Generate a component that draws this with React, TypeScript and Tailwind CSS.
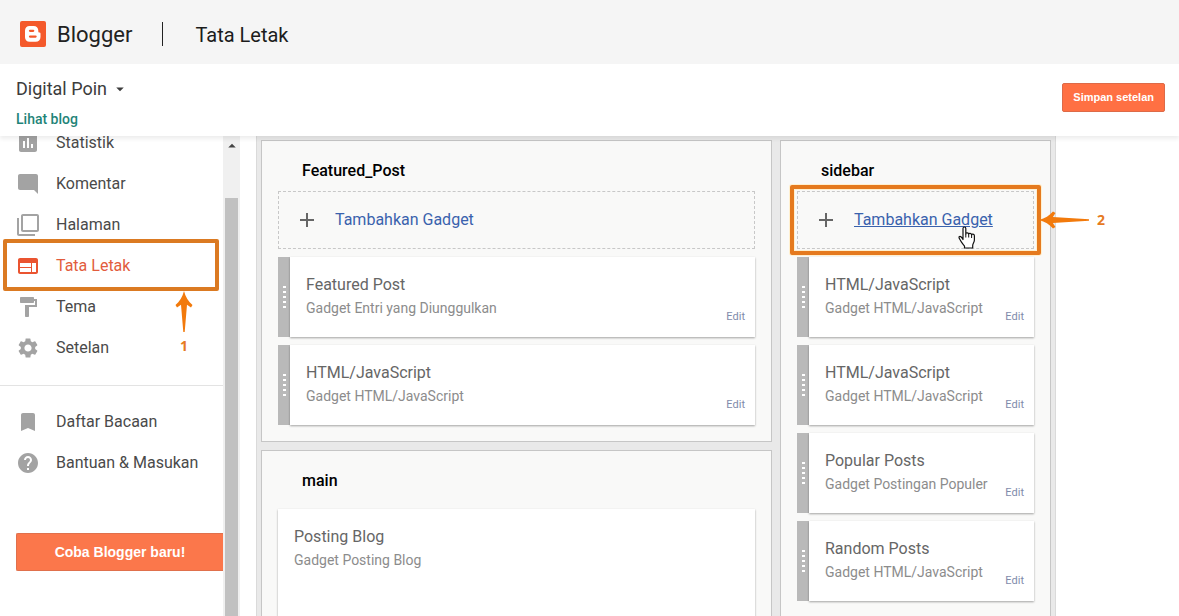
import { ReactNode } from "react";
import { IconType } from "react-icons";
import {
  MdAdd,
  MdArrowDropDown,
  MdArrowDropUp,
  MdAssessment,
  MdBookmark,
  MdFilterNone,
  MdFormatPaint,
  MdHelp,
  MdModeComment,
  MdSettings,
  MdWeb,
} from "react-icons/md";

type MenuItem = { label: string; icon: IconType; active?: boolean };

const menu: MenuItem[] = [
  { label: "Statistik", icon: MdAssessment },
  { label: "Komentar", icon: MdModeComment },
  { label: "Halaman", icon: MdFilterNone },
  { label: "Tata Letak", icon: MdWeb, active: true },
  { label: "Tema", icon: MdFormatPaint },
  { label: "Setelan", icon: MdSettings },
];

const links: MenuItem[] = [
  { label: "Daftar Bacaan", icon: MdBookmark },
  { label: "Bantuan & Masukan", icon: MdHelp },
];

const featured = [
  { title: "Featured Post", type: "Gadget Entri yang Diunggulkan" },
  { title: "HTML/JavaScript", type: "Gadget HTML/JavaScript" },
];

const sidebar = [
  { title: "HTML/JavaScript", type: "Gadget HTML/JavaScript" },
  { title: "HTML/JavaScript", type: "Gadget HTML/JavaScript" },
  { title: "Popular Posts", type: "Gadget Postingan Populer" },
  { title: "Random Posts", type: "Gadget HTML/JavaScript" },
];

function BloggerLogo() {
  return (
    <svg width="26" height="26" viewBox="0 0 26 26" aria-hidden="true">
      <rect width="26" height="26" rx="2" fill="#f4592b" />
      <path
        fill="#fff"
        fillRule="evenodd"
        d="M9.500 5h4.200c2.700 0 4.600 1.900 4.600 4.500v.8c0 .8.4 1.200 1 1.200.8 0 1.200.4 1.200 1.100V16c0 2.900-2 4.800-4.800 4.800H9.500C6.900 20.800 5 18.900 5 16.300V9.500C5 6.900 6.900 5 9.500 5zM10 8.800c-1.500 0-1.500 2.200 0 2.200h3.200c1.500 0 1.500-2.200 0-2.200zM10 14.600c-1.500 0-1.500 2.200 0 2.200h5.600c1.500 0 1.500-2.200 0-2.200z"
      />
    </svg>
  );
}

function HandCursor() {
  return (
    <svg
      className="absolute left-[160px] top-[34px]"
      width="18"
      height="23"
      viewBox="0 0 18 23"
      aria-hidden="true"
    >
      <path
        d="M5 13.500V2.500C5 .5 7.800 .5 7.800 2.500V8c0-1.700 2.900-1.500 2.900 .3 0-1.400 2.900-1.200 2.900 .6 0-1.300 2.800-1.100 2.800.8V14c0 2.500-1.700 3.500-1.700 5.500V22H6.500v-2C5 18 3.500 16.500 2.500 14.500 1 12 .5 11.500 1.200 10.700 2.500 9.700 4 11.500 5 13.500z"
        fill="#fff"
        stroke="#111"
        strokeWidth="1.200"
        strokeLinejoin="round"
      />
      <path d="M7.800 8v3.500M10.700 8.500v3M13.600 9v3" stroke="#111" strokeWidth="1" />
    </svg>
  );
}

function MenuRow({ item }: { item: MenuItem }) {
  const Icon = item.icon;
  return (
    <li className="relative">
      <a
        href="#"
        className={`flex h-[41px] items-center gap-4 px-4 ${
          item.active ? "text-[#e25c3d]" : "text-[#4a4a4a]"
        }`}
      >
        <Icon
          size={24}
          className={item.active ? "text-[#ea5430]" : "text-[#a3a3a3]"}
        />
        {item.label}
      </a>
      {item.active && (
        <>
          <div className="pointer-events-none absolute -top-[6px] left-[3px] h-[52px] w-[216px] rounded-xs border-4 border-[#db7a22]" />
          <div className="absolute left-[175px] top-[46px] z-10 flex w-[18px] flex-col items-center">
            <svg width="18" height="41" viewBox="0 0 18 41" aria-hidden="true">
              <path
                d="M9 0C10.500 6 13.500 10.500 17.500 14l-1.500 2.500L12 13.800 9.700 41H8.300L6 13.800 2 16.500 .5 14C4.500 10.500 7.500 6 9 0z"
                fill="#f27a0c"
              />
            </svg>
            <Step>1</Step>
          </div>
        </>
      )}
    </li>
  );
}

function Step({ children }: { children: ReactNode }) {
  return (
    <span className="font-['Open_Sans',sans-serif] text-sm leading-7 font-bold text-[#e67a22]">
      {children}
    </span>
  );
}

function Section({ title, children }: { title: string; children: ReactNode }) {
  return (
    <section className="border border-[#c6c6c6] bg-[#f9f9f8] px-4 pb-4">
      <h2 className="flex h-[50px] items-center pt-[10px] pl-6 font-medium text-black">
        {title}
      </h2>
      {children}
    </section>
  );
}

function AddGadget({ highlighted }: { highlighted?: boolean }) {
  return (
    <div className="relative flex h-[58px] items-center border border-dashed border-[#c8c8c8] pl-4">
      <MdAdd size={24} className="mr-4 text-[#666]" />
      <a
        href="#"
        className={`text-[#3a62ad] ${highlighted ? "underline" : ""}`}
      >
        Tambahkan Gadget
      </a>
      {highlighted && (
        <>
          <div className="pointer-events-none absolute -inset-x-2 -inset-y-[7px] rounded-xs border-4 border-[#e57a1e] shadow-[inset_0_0_0_1px_#fff0cf,0_0_0_1px_#fff0cf]" />
          <HandCursor />
          <div className="absolute left-full top-[14px] ml-[6px] flex items-center gap-2">
            <svg width="50" height="18" viewBox="0 0 50 18" aria-hidden="true">
              <path
                d="M0 9C6 7.500 10.500 4.500 14 .5L16.500 2 13.800 6 50 8.300v1.400L13.800 12 16.500 16l-2.500 1.500C10.500 13.500 6 10.500 0 9z"
                fill="#f27a0c"
              />
            </svg>
            <Step>2</Step>
          </div>
        </>
      )}
    </div>
  );
}

function Gadget({ title, type }: { title: string; type: string }) {
  return (
    <article className="mt-2 flex h-20">
      <div className="flex w-3 shrink-0 cursor-move flex-col items-center justify-center gap-[3px] bg-[#b9b9b9]">
        {[0, 1, 2, 3, 4].map((dot) => (
          <span key={dot} className="h-[2px] w-[3px] bg-white" />
        ))}
      </div>
      <div className="relative min-w-0 flex-1 bg-white px-4 pt-4 shadow-[0_1px_2px_rgba(0,0,0,0.35)]">
        <h3 className="leading-6 text-[#666]">{title}</h3>
        <p className="text-sm leading-[22px] text-[#8c8c8c]">{type}</p>
        <a
          href="#"
          className="absolute right-[10px] bottom-3 text-[11px] leading-4 text-[#7f8bab]"
        >
          Edit
        </a>
      </div>
    </article>
  );
}

export default function App() {
  return (
    <div className="flex h-screen flex-col overflow-hidden bg-white font-[Roboto,sans-serif] text-base">
      <header className="flex h-16 shrink-0 items-center bg-[#f5f5f5] px-5 pt-1">
        <BloggerLogo />
        <span className="ml-[11px] pt-px text-[22px] text-[#222]">Blogger</span>
        <span className="ml-[30px] h-6 w-px bg-[#222]" />
        <h1 className="ml-8 pt-[2px] text-xl text-[#1c1c1c]">Tata Letak</h1>
      </header>

      <div className="relative z-10 flex h-[72px] shrink-0 items-start justify-between bg-white pr-[14px] pl-4 shadow-[0_3px_4px_rgba(0,0,0,0.07)]">
        <div className="flex flex-col pt-[11px]">
          <button className="flex items-center gap-1 text-lg leading-7 text-[#3c3c3c]">
            Digital Poin
            <MdArrowDropDown size={18} />
          </button>
          <a href="#" className="mt-[2px] text-sm leading-7 font-medium text-[#1f8478]">
            Lihat blog
          </a>
        </div>
        <button className="mt-[19px] h-[29px] rounded-xs border border-[#dd6a48] bg-[#ff7043] px-[10px] font-['Liberation_Sans',Arial,sans-serif] text-[11px] font-bold text-white">
          Simpan setelan
        </button>
      </div>

      <div className="flex min-h-0 flex-1">
        <aside className="w-[223px] shrink-0 overflow-hidden">
          <nav className="-mt-[14px]">
            <ul>
              {menu.map((item) => (
                <MenuRow key={item.label} item={item} />
              ))}
            </ul>
            <ul className="mt-[17px] border-t border-[#e3e3e3] pt-[15px]">
              {links.map((item) => (
                <MenuRow key={item.label} item={item} />
              ))}
            </ul>
          </nav>
          <div className="mt-[50px] pl-4">
            <button className="h-[38px] w-full rounded-l-xs border border-r-0 border-[#e0704c] bg-[#fb774b] font-['Liberation_Sans',Arial,sans-serif] text-sm font-bold text-white">
              Coba Blogger baru!
            </button>
          </div>
        </aside>

        <div className="flex w-[17px] shrink-0 flex-col items-center bg-[#f0f0f0] pt-px">
          <MdArrowDropUp size={18} className="shrink-0 text-[#444]" />
          <div className="mt-[43px] w-[13px] flex-1 bg-[#c1c1c1]" />
        </div>

        <main className="min-w-0 flex-1 overflow-hidden pr-[123px] pl-4">
          <div className="grid h-full grid-cols-[minmax(0,1fr)_271px] gap-2 border-x border-[#dadada] bg-[#e9e9e9] px-1 pt-1">
            <div className="flex flex-col gap-2">
              <Section title="Featured_Post">
                <AddGadget />
                {featured.map((gadget, i) => (
                  <Gadget key={i} {...gadget} />
                ))}
              </Section>
              <Section title="main">
                <article className="mt-2 h-40 bg-white p-4 shadow-[0_1px_2px_rgba(0,0,0,0.35)]">
                  <h3 className="leading-6 text-[#666]">Posting Blog</h3>
                  <p className="text-sm leading-[22px] text-[#8c8c8c]">
                    Gadget Posting Blog
                  </p>
                </article>
              </Section>
            </div>
            <Section title="sidebar">
              <AddGadget highlighted />
              {sidebar.map((gadget, i) => (
                <Gadget key={i} {...gadget} />
              ))}
            </Section>
          </div>
        </main>
      </div>
    </div>
  );
}
